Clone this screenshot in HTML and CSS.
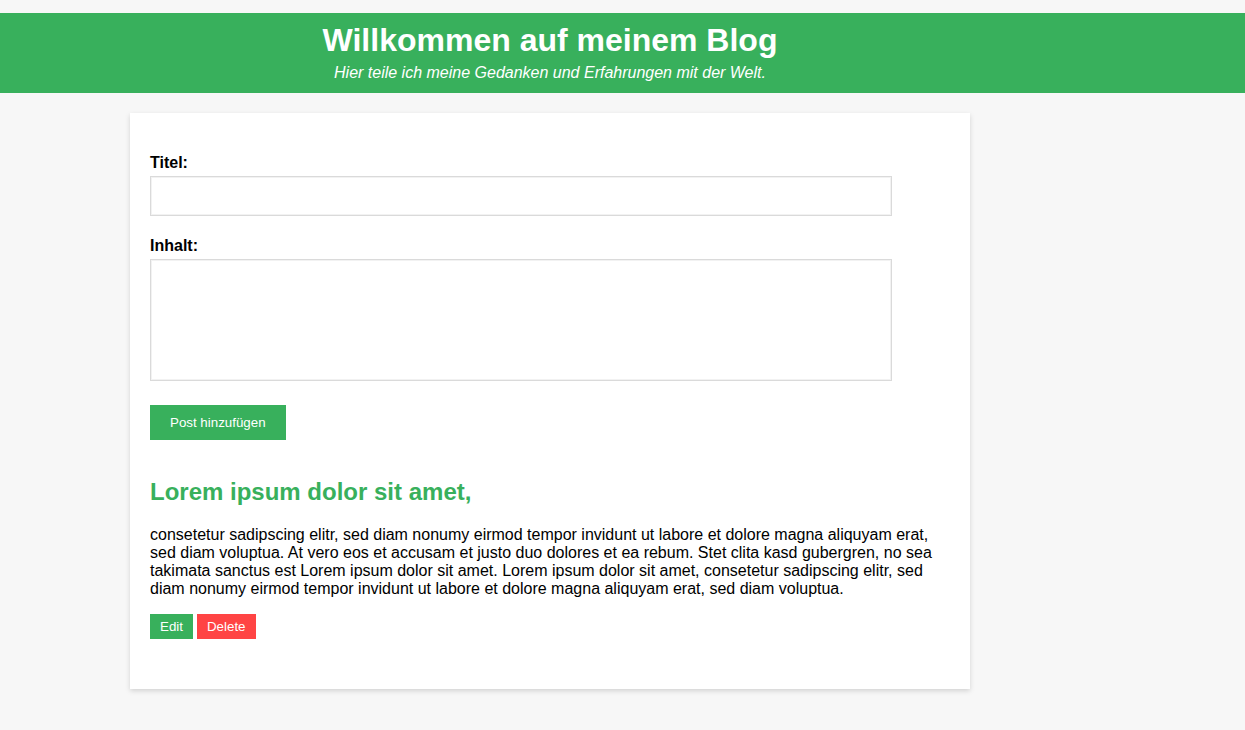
FILE: index.html
```html
<!DOCTYPE html>
<html lang="de">
<head>
<meta charset="utf-8">
<title>Blog</title>
<link rel="stylesheet" href="styles.css">
</head>
<body>
<header class="site-header">
  <div class="header-inner">
    <h1 class="site-title">Willkommen auf meinem Blog</h1>
    <p class="site-tagline">Hier teile ich meine Gedanken und Erfahrungen mit der Welt.</p>
  </div>
</header>
<main class="card">
  <form class="post-form">
    <label class="field-label" for="titel">Titel:</label>
    <input class="field-input" id="titel" type="text">
    <label class="field-label" for="inhalt">Inhalt:</label>
    <textarea class="field-textarea" id="inhalt"></textarea>
    <button class="btn btn-add" type="button">Post hinzufügen</button>
  </form>
  <article class="post">
    <h2 class="post-title">Lorem ipsum dolor sit amet,</h2>
    <p class="post-body">consetetur sadipscing elitr, sed diam nonumy eirmod tempor invidunt ut labore et dolore magna aliquyam erat, sed diam voluptua. At vero eos et accusam et justo duo dolores et ea rebum. Stet clita kasd gubergren, no sea takimata sanctus est Lorem ipsum dolor sit amet. Lorem ipsum dolor sit amet, consetetur sadipscing elitr, sed diam nonumy eirmod tempor invidunt ut labore et dolore magna aliquyam erat, sed diam voluptua.</p>
    <div class="post-actions">
      <button class="btn btn-small btn-edit" type="button">Edit</button>
      <button class="btn btn-small btn-delete" type="button">Delete</button>
    </div>
  </article>
</main>
</body>
</html>
```
FILE: styles.css
```css
* { box-sizing: border-box; }
html, body {
  margin: 0;
  padding: 0;
  background: #f7f7f7;
  font-family: "Liberation Sans", Arial, sans-serif;
  color: #000;
}
body { padding-top: 13px; padding-bottom: 40px; }

.site-header {
  background: #38b05c;
  color: #fff;
  height: 80px;
}
.header-inner {
  width: 1100px;
  text-align: center;
  padding-top: 7px;
}
.site-title {
  margin: 0;
  font-size: 32px;
  line-height: 40px;
  font-weight: bold;
}
.site-tagline {
  margin: 2px 0 0;
  font-size: 16px;
  line-height: 22px;
  font-style: italic;
}

.card {
  display: block;
  width: 840px;
  margin: 20px 0 0 130px;
  background: #fff;
  padding: 41px 20px 50px;
  box-shadow: 0 2px 5px rgba(0, 0, 0, 0.15);
}

.post-form { display: flex; flex-direction: column; align-items: flex-start; }
.field-label {
  display: block;
  font-weight: bold;
  font-size: 16px;
  line-height: 18px;
  margin-bottom: 4px;
}
.field-input, .field-textarea {
  display: block;
  width: 742px;
  padding: 10px;
  border: 1px solid #dadada;
  box-shadow: inset 0 0 0 1px #f2f2f2;
  font-family: inherit;
  font-size: 16px;
  background: #fff;
  margin: 0 0 21px;
}
.field-input { height: 40px; }
.field-textarea { height: 122px; resize: none; margin-bottom: 24px; }

.btn {
  border: none;
  color: #fff;
  font-family: "Liberation Sans", Arial, sans-serif;
  font-size: 13.33px;
  cursor: pointer;
}
.btn-add {
  background: #38b05c;
  height: 35px;
  padding: 0 20px;
  line-height: 35px;
}

.post { margin-top: 38px; }
.post-title {
  margin: 0;
  color: #38b05c;
  font-size: 24px;
  line-height: 28px;
  font-weight: bold;
}
.post-body {
  margin: 20px 0 16px;
  font-size: 16px;
  line-height: 18px;
}
.post-actions { display: flex; gap: 4px; }
.btn-small {
  height: 25px;
  padding: 0 10px;
  line-height: 25px;
}
.btn-edit { background: #38b05c; }
.btn-delete { background: #ff4444; }
```
